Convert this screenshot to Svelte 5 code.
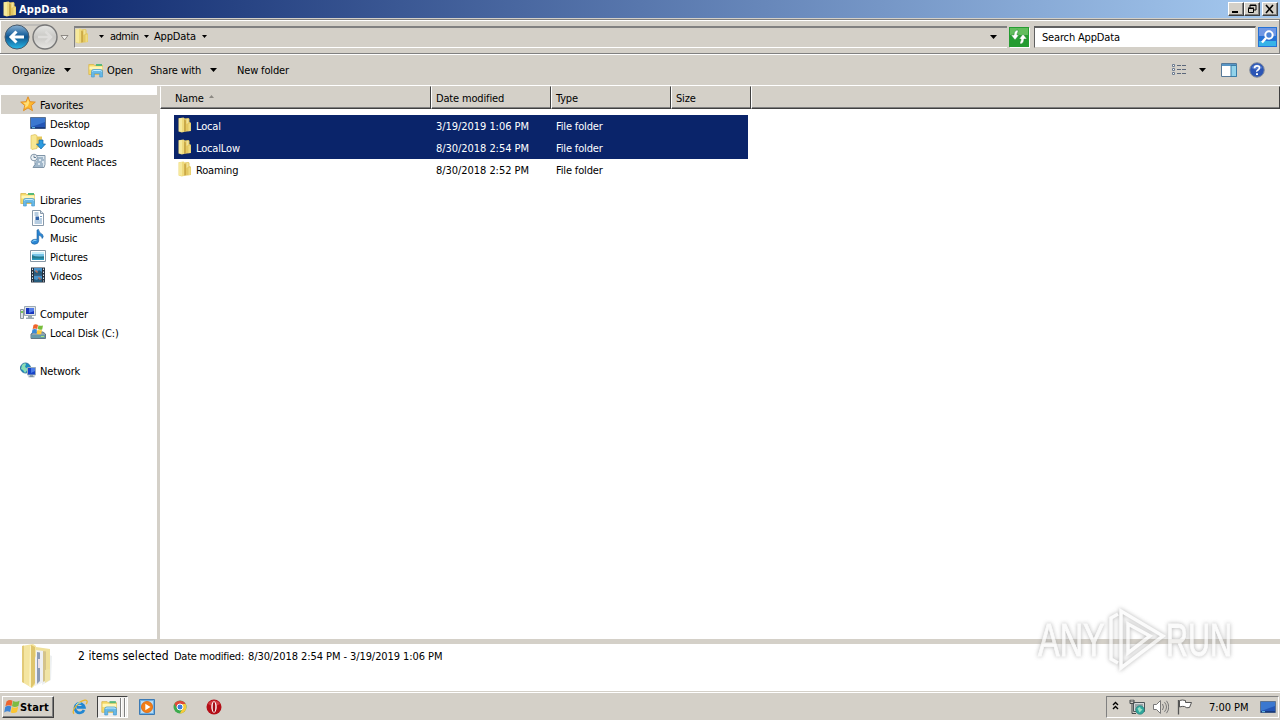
<script lang="ts">
	type NavItem = { label: string; icon: string; child?: boolean; active?: boolean };

	const navGroups: NavItem[][] = [
		[
			{ label: 'Favorites', icon: 'star', active: true },
			{ label: 'Desktop', icon: 'desktop', child: true },
			{ label: 'Downloads', icon: 'downloads', child: true },
			{ label: 'Recent Places', icon: 'recent', child: true }
		],
		[
			{ label: 'Libraries', icon: 'explorer' },
			{ label: 'Documents', icon: 'document', child: true },
			{ label: 'Music', icon: 'music', child: true },
			{ label: 'Pictures', icon: 'picture', child: true },
			{ label: 'Videos', icon: 'video', child: true }
		],
		[
			{ label: 'Computer', icon: 'computer' },
			{ label: 'Local Disk (C:)', icon: 'disk', child: true }
		],
		[{ label: 'Network', icon: 'network' }]
	];

	const files = [
		{ name: 'Local', modified: '3/19/2019 1:06 PM', type: 'File folder' },
		{ name: 'LocalLow', modified: '8/30/2018 2:54 PM', type: 'File folder' },
		{ name: 'Roaming', modified: '8/30/2018 2:52 PM', type: 'File folder' }
	];

	let selected = $state(['Local', 'LocalLow']);

	function selectFile(name: string) {
		selected = [name];
	}
</script>

<svelte:head>
	<title>AppData</title>
</svelte:head>

{#snippet icon(name: string, size = 16)}
	<svg class="icon" width={size} height={size} viewBox="0 0 16 16">
		{#if name === 'folder'}
			<path d="M7.5 1.5l4-.5 1 1v3l1.5.8V14l-6 .8z" fill="#e3c762" />
			<path d="M9.5 2l2-.3v4L9.5 7z" fill="#f0e198" />
			<path d="M11.5 7l2-.8v7.6l-2 .4z" fill="#efdb80" />
			<path d="M1.5 1.2L6.5.5l1.3 1v13.3l-3 .7-3.3-1z" fill="#efda7c" />
			<path d="M2 1.5l3-.4v13.6l-3-.7z" fill="#f6e99c" />
			<path d="M7.3 2.5l1.4 1v10.6l-1.4.7z" fill="#c39e39" />
		{:else if name === 'star'}
			<path d="M8 .8l2 4.9 5.3.4-4.1 3.4 1.3 5.2L8 11.9l-4.5 2.8 1.3-5.2L.7 6.1l5.3-.4z" fill="#ffb92c" stroke="#e0902c" />
			<path d="M8 3l1.2 3.6L8 10 4.6 12l1-3.3L3 6.8l3.7-.2z" fill="#ffdf7a" />
		{:else if name === 'desktop'}
			<path d="M.5 2.5h15v11H.5z" fill="#2456b5" stroke="#5c7391" />
			<path d="M1 3h14v4L4 11l-3 1z" fill="#3b78d0" />
			<path d="M1 12.2h14v1.3H1z" fill="#173573" />
			<path d="M2 12.2h3v1H2z" fill="#73d3f6" />
		{:else if name === 'downloads'}
			<path d="M1 1.5L5 .5l2 1v13l-5 1-1-1z" fill="#f8e793" stroke="#d9b94d" stroke-width=".6" />
			<path d="M7 2.5h5v11H7z" fill="#e7c85c" />
			<path d="M9 6h4v4h2.5l-4.5 5-4.5-5H9z" fill="#2c9be0" stroke="#1667a6" stroke-width=".7" />
		{:else if name === 'recent'}
			<path d="M5 2.5h10v9l-1 3H3l2-3z" fill="#dce7ef" stroke="#8095a8" />
			<path d="M7 5h6M7 7h2m2 0h3M6 9h6M5 11h3m2 0h3M4 13h9" stroke="#6687a5" />
			<circle cx="4" cy="4.5" r="3.3" fill="#f0f4f7" stroke="#8598aa" />
			<path d="M4 2.5v2h2" fill="none" stroke="#466480" stroke-width=".8" />
		{:else if name === 'explorer'}
			<path d="M.8 2.5h5l1 1h7.7v9H.8z" fill="#f7dc6a" stroke="#d7b650" stroke-width=".8" />
			<path d="M1.5 4.5h13v3h-13z" fill="#fff6b7" />
			<path d="M8 2h6v2H8z" fill="#57b87a" />
			<path d="M3.5 15V9.5Q3.5 7.5 5.5 7.5h7q2 0 2 2V15h-2.8v-3.5H6.3V15z" fill="#67b9e8" stroke="#4a9bd0" stroke-width=".7" />
			<path d="M4.5 9.5q0-1 1-1h7q1 0 1 1" fill="none" stroke="#c4ecff" />
		{:else if name === 'document'}
			<path d="M2.5.5h8l3 3v12h-11z" fill="#fff" stroke="#8899aa" />
			<path d="M10.5.5v3h3" fill="#d3dfe8" stroke="#8899aa" />
			<path d="M4.5 3h4M4.5 5h4M9.5 9h2.5M4.5 11h7.5M4.5 13h7.5" stroke="#6f9ac2" />
			<path d="M5.5 6.5H9V10H5.5z" fill="#2f62a8" />
			<path d="M10 6.5h2" stroke="#6f9ac2" />
		{:else if name === 'music'}
			<path d="M7 1l1.5-.5Q9 4 12.5 5.5q1.5 2-.3 4Q12 7 8.7 6v6Q8.5 15 4.5 15.3 1 15 1.2 12.6 2 10 7 10.3z" fill="#2a86d4" stroke="#165c9c" stroke-width=".6" />
			<path d="M2.5 12.5q1-1.4 4-1.2" stroke="#8bd2f8" fill="none" />
		{:else if name === 'picture'}
			<path d="M.5 2.5h15v11H.5z" fill="#fff" stroke="#8797a5" />
			<path d="M2 4h12v8H2z" fill="#78c4e8" />
			<path d="M2 4h12v2H2z" fill="#c9effa" />
			<path d="M2 7q4 2.4 12 1.2v3.8H2z" fill="#247a8e" />
			<path d="M2 10.5h12V12H2z" fill="#2b9bc0" />
		{:else if name === 'video'}
			<path d="M1 .5h14v15H1z" fill="#26313f" />
			<path d="M4 1h8v6.5H4zM4 8.5h8V15H4z" fill="#4892ca" />
			<path d="M4 4l3 1 2-2 3 2v2.5H4zM4 12l3 1 2-2 3 1v3H4z" fill="#265b7c" />
			<path d="M5 4h2v2M8 11h2v2" stroke="#d56f4d" fill="none" />
			<path d="M2.5 1.5v13M13.5 1.5v13" stroke="#dbe6ef" stroke-dasharray="1.5 1.5" />
		{:else if name === 'computer'}
			<path d="M.5 4.5h3v9h-3z" fill="#dce2e5" stroke="#8a969e" />
			<path d="M1 6h2v2H1z" fill="#78c85a" />
			<path d="M4.5 1.5h11v9h-11z" fill="#e0e4e8" stroke="#9caab3" />
			<path d="M6 3h8v6H6z" fill="#1734bd" />
			<path d="M9 3h5v3L9 8z" fill="#527cea" />
			<path d="M8 11h4v1.5h2V14H6v-1.5h2z" fill="#9aa9b3" />
		{:else if name === 'disk'}
			<path d="M1 10l3-2h9l2.5 2v4.5H1z" fill="#8ea2ae" stroke="#607785" />
			<path d="M1.5 11h13.5v3H1.5z" fill="#659aaa" />
			<path d="M11 12h3v1h-3z" fill="#a6e877" />
			<path d="M3.5 1q2-1.3 4.5 0l-.8 4q-2.3-1-4.5 0z" fill="#ef642c" />
			<path d="M8.5 1.2q2 1.2 4.5.2l-.8 4q-2.3.7-4.5-.3z" fill="#78bd3b" />
			<path d="M2.5 5.5q2-1 4.5 0l-.8 4q-2.3-1-4.5 0z" fill="#3889d7" />
			<path d="M7.5 5.8q2 1 4.5.2l-.8 4q-2.3.8-4.5-.3z" fill="#ffc836" />
		{:else if name === 'network'}
			<circle cx="5.5" cy="6" r="5" fill="#198fc2" stroke="#34729c" />
			<path d="M2 3q3-3 4-1L5 5l3 2-3 4-2-3-2-1z" fill="#8bdcb4" />
			<path d="M7.5 5.5h8v7.5h-8z" fill="#1743c7" stroke="#9aabb8" />
			<path d="M11 6h4v3l-4 2z" fill="#497be8" />
			<path d="M10 13.3h3v1h1.5v1h-6v-1H10z" fill="#7d91a1" />
		{:else if name === 'windows'}
			<path d="M2.5 2.5q3-2.5 6-.8L7.5 7Q4.5 5.3 1.4 7.3z" fill="#ed6530" />
			<path d="M9 2q3 1.6 6.6-.3L14.4 7Q11 9 8 7.3z" fill="#7dbb42" />
			<path d="M1.2 8q3-2 6.1-.5L6.2 13q-3-1.6-6 .5z" fill="#3f85d5" />
			<path d="M7.9 8q3 1.5 6.3-.2L13 13q-3 1.8-6.2.4z" fill="#fbc532" />
		{:else if name === 'ie'}
			<path d="M12 11A4.7 4.7 0 1 1 12.3 8.3H5" fill="none" stroke="#2287d2" stroke-width="2.8" />
			<path d="M2 14.8C-1 12 6 2.5 12.8 1.2c3-.5 2.7 2 1.4 4" fill="none" stroke="#e9b62c" stroke-width="1.3" />
			<path d="M4 6q2-3 5-2" fill="none" stroke="#8ee0ff" />
		{:else if name === 'wmp'}
			<path d="M.5.5h15v15H.5z" fill="#6db0e5" stroke="#3c7ab4" />
			<path d="M2 2h12v12H2z" fill="#b9dbf2" />
			<circle cx="8" cy="8" r="5.6" fill="#f27e16" stroke="#d65f08" stroke-width=".7" />
			<path d="M6.3 4.7v6.6L11.5 8z" fill="#fff" />
		{:else if name === 'chrome'}
			<circle cx="8" cy="8" r="6.5" fill="#3dab4d" />
			<path d="M2.4 4.7A6.5 6.5 0 0 1 13.6 5H8L5 9z" fill="#df4939" />
			<path d="M13.6 5A6.5 6.5 0 0 1 7.8 14.5L10.8 9 8 5z" fill="#f8c939" />
			<circle cx="8" cy="8" r="3" fill="#3c7edb" stroke="#fff" />
		{:else if name === 'opera'}
			<circle cx="8" cy="8" r="7.5" fill="#b40e17" />
			<path d="M2 5a7 7 0 0 1 12 0Q8 9 2 5z" fill="#d23c42" />
			<ellipse cx="8" cy="8" rx="2.7" ry="5.7" fill="#fff" />
			<ellipse cx="8" cy="8" rx="1.3" ry="5" fill="#a50d16" />
		{:else if name === 'tray-network'}
			<path d="M4.5 3.5h11v9h-11z" fill="#d5d9da" stroke="#4e5558" />
			<path d="M6 5h8v6H6z" fill="#9aa7a9" />
			<path d="M1 1v3.5h4V1M3 4.5v10h4M2 .5V3M4 .5V3" fill="none" stroke="#454b4c" />
			<circle cx="11" cy="11" r="4.3" fill="#31a89d" stroke="#247c7b" stroke-width=".6" />
			<path d="M8.5 9.5q3-3 3 0l2 1-3 3z" fill="#9be1c6" />
		{:else if name === 'speaker'}
			<path d="M.5 5.5h3l4-4v13l-4-4h-3z" fill="#fff" stroke="#777" />
			<path d="M9.5 5q2 3 0 6M11.5 3.2q4 4.8 0 9.6M13.5 1.8q4.5 6.2 0 12.4" fill="none" stroke="#777" />
		{:else if name === 'flag'}
			<path d="M1.5 1v14.5" stroke="#555" stroke-width="1.3" />
			<path d="M2.5 1.5q3-1 6 0v2h6l-2 5q-3 1-5-1-2-.5-5 .5z" fill="#fff" stroke="#555" />
		{:else if name === 'views'}
			<path d="M1.5 2.5h2v2h-2zM1.5 6.5h2v2h-2zM1.5 10.5h2v2h-2z" fill="#fff" stroke="#6d7c91" />
			<path d="M6 3.5h4m1 0h4M6 7.5h4m1 0h4M6 11.5h4m1 0h4" stroke="#5c687b" />
		{:else if name === 'pane'}
			<path d="M.5 1.5h15v13H.5z" fill="#fff" stroke="#557898" />
			<path d="M1 2h14v2H1z" fill="#5795c5" />
			<path d="M10 3.5h5.5v11H10z" fill="#92d3ea" stroke="#397da8" />
		{:else if name === 'help'}
			<circle cx="8" cy="8" r="7.3" fill="#2b55b5" stroke="#87909e" />
			<path d="M2.5 6a6 6 0 0 1 11 0Q8 9 2.5 6z" fill="#5379cb" />
			<path d="M5.5 6.2Q5.6 3.8 8 3.8t2.5 2Q10.5 7 9 8t-1 1.8" fill="none" stroke="#fff" stroke-width="1.7" />
			<path d="M7 11.2h2v1.7H7z" fill="#fff" />
		{/if}
	</svg>
{/snippet}

{#snippet arrow()}
	<svg class="arrow" width="7" height="4" viewBox="0 0 7 4"><path d="M0 0h7L3.5 4z" fill="#000" /></svg>
{/snippet}

<div class="screen">
	<header class="titlebar">
		{@render icon('folder')}
		<h1>AppData</h1>
		<div class="window-buttons">
			<button aria-label="Minimize"><svg width="12" height="10"><path d="M2 7h6v2H2z" /></svg></button>
			<button aria-label="Restore"><svg width="12" height="10"><path d="M4 1h6v5H8M4 1.5h6M4 1v3M2.5 4.5h5v4h-5zM2 4h6" fill="none" stroke="#000" /></svg></button>
			<button class="close" aria-label="Close"><svg width="12" height="10"><path d="M2 1l7 8M9 1L2 9" stroke="#000" stroke-width="1.6" /></svg></button>
		</div>
	</header>

	<div class="address-row">
		<svg class="nav-buttons" width="68" height="30" viewBox="0 0 68 30">
			<defs>
				<linearGradient id="back" x2="0" y2="1">
					<stop offset="0" stop-color="#8db2d2" />
					<stop offset=".35" stop-color="#2d70a8" />
					<stop offset=".5" stop-color="#10558e" />
					<stop offset="1" stop-color="#28b9e8" />
				</linearGradient>
				<linearGradient id="forward" x2="0" y2="1">
					<stop offset="0" stop-color="#e6e6e4" />
					<stop offset=".5" stop-color="#c9c8c5" />
					<stop offset="1" stop-color="#e8e7e4" />
				</linearGradient>
			</defs>
			<path d="M14 3h31" stroke="#a7a8a8" />
			<circle cx="15" cy="15" r="12" fill="url(#back)" stroke="#495b6c" />
			<path d="M22 15H9m5.5-5.5L9 15l5.5 5.5" fill="none" stroke="#fff" stroke-width="3" />
			<circle cx="43" cy="15" r="12" fill="url(#forward)" stroke="#777" stroke-width="1.4" />
			<path d="M36 15h13m-5.5-5.5L49 15l-5.5 5.5" fill="none" stroke="#dedddb" stroke-width="2.5" />
			<path d="M59 13.5h7L62.5 18z" fill="#f3f1ed" stroke="#77736e" stroke-width=".8" />
		</svg>
		<div class="address">
			{@render icon('folder')}
			<span class="crumb-start">{@render arrow()}</span>
			<span class="crumb admin">admin</span>
			{@render arrow()}
			<span class="crumb appdata">AppData</span>
			{@render arrow()}
			<span class="history">{@render arrow()}</span>
		</div>
		<button class="refresh" aria-label="Refresh">
			<svg width="20" height="20" viewBox="0 0 20 20">
				<path d="M0 0h20v20H0z" fill="#259c31" />
				<path d="M1 1h18v7H1z" fill="#62bd5d" />
				<path d="M9 3Q5 3 5 8H2l4 5 4-5H8q0-2 1-3zM11 17q4 0 4-5h3l-4-5-4 5h2q0 2-1 3z" fill="#fff" stroke="#278532" stroke-width=".5" />
			</svg>
		</button>
		<div class="search">Search AppData</div>
		<button class="search-button" aria-label="Search">
			<svg width="19" height="20" viewBox="0 0 19 20">
				<path d="M0 0h19v20H0z" fill="#2671d4" />
				<path d="M1 1h17v8H1z" fill="#6f97e4" />
				<path d="M1 14h17v5H1z" fill="#36b3e8" />
				<circle cx="11" cy="8" r="3.7" fill="#4b83d6" stroke="#fff" stroke-width="2" />
				<path d="M8 11l-4 4.5" stroke="#fff" stroke-width="2.5" />
			</svg>
		</button>
	</div>

	<nav class="toolbar">
		<span class="organize">Organize</span>
		{@render arrow()}
		<span class="open">{@render icon('explorer')} Open</span>
		<span class="share">Share with</span>
		{@render arrow()}
		<span class="new-folder">New folder</span>
		<div class="toolbar-right">
			{@render icon('views')}
			{@render arrow()}
			<span class="pane">{@render icon('pane')}</span>
			{@render icon('help')}
		</div>
	</nav>

	<main>
		<aside>
			{#each navGroups as group}
				<ul>
					{#each group as item}
						<li class:child={item.child} class:active={item.active}>
							{@render icon(item.icon)}
							<span>{item.label}</span>
						</li>
					{/each}
				</ul>
			{/each}
		</aside>

		<section class="files">
			<div class="columns">
				<span class="name">Name <svg width="5" height="3" viewBox="0 0 5 3"><path d="M0 3h5L2.5 0z" fill="#8b8882" /></svg></span>
				<span>Date modified</span>
				<span>Type</span>
				<span class="size">Size</span>
				<span class="rest"></span>
			</div>
			<div class="rows">
				{#each files as file}
					<button class="row" class:selected={selected.includes(file.name)} onclick={() => selectFile(file.name)}>
						<span class="file-name">{@render icon('folder')}{file.name}</span>
						<span class="date">{file.modified}</span>
						<span>{file.type}</span>
					</button>
				{/each}
			</div>
		</section>
	</main>

	<footer class="details">
		<svg class="big-folder" width="36" height="46" viewBox="0 0 36 46">
			<path d="M24 10l8 3-1 24-9 5z" fill="#edf0f1" />
			<path d="M16 4l14 2v30l-14 6z" fill="#efe09a" />
			<path d="M15 7l9 1v31l-9 4z" fill="#eef0f4" />
			<path d="M17 9l3 .5V38l-3 3z" fill="#8c9bb5" />
			<path d="M18 16h2v9h-2z" fill="#eadfe6" />
			<path d="M23 8l3 .5V37l-3 2z" fill="#d4c38b" />
			<path d="M25 27l5-1v11l-5 3z" fill="#f0e4a5" />
			<path d="M2 3l11-2 3 2v10l-1 2v27l-3 3-10-6z" fill="#f4e5a1" />
			<path d="M2 3l2-.4V40l-2-1z" fill="#e2ca78" />
			<path d="M11 2l4 2v36l-4 5z" fill="#dfc56d" />
			<path d="M10 3h1v41l-2-1z" fill="#fbf2c0" />
		</svg>
		<span class="count">2 items selected</span>
		<span class="detail-label">Date modified:</span>
		<span class="range">8/30/2018 2:54 PM - 3/19/2019 1:06 PM</span>
	</footer>

	<div class="taskbar">
		<button class="start">{@render icon('windows')}Start</button>
		<span class="ie">{@render icon('ie')}</span>
		<span class="task-active">{@render icon('explorer', 17)}<i></i><i></i></span>
		<span class="wmp">{@render icon('wmp')}</span>
		<span class="chrome">{@render icon('chrome')}</span>
		<span class="opera">{@render icon('opera')}</span>
		<div class="tray">
			<svg class="chevrons" width="7" height="9" viewBox="0 0 7 9"><path d="M1 4l2.5-2.5L6 4M1 8l2.5-2.5L6 8" fill="none" stroke="#000" stroke-width="1.4" /></svg>
			{@render icon('tray-network')}
			{@render icon('speaker')}
			{@render icon('flag')}
			<time>7:00 PM</time>
			{@render icon('desktop')}
		</div>
	</div>

	<div class="watermark">
		<span class="any">ANY</span>
		<svg width="60" height="64" viewBox="0 0 60 64">
			<path d="M12 6L5 10v41l7 4" />
			<path d="M15 3l42 25-42 32zm7 13v29l22-17z" />
		</svg>
		<span class="run">RUN</span>
	</div>
</div>

<style>
	:global(body) {
		overflow: hidden;
	}

	.screen {
		position: relative;
		display: flex;
		flex-direction: column;
		width: 1280px;
		height: 720px;
		background: #d4d0c8;
		font-family: 'DejaVu Sans Condensed', 'DejaVu Sans', sans-serif;
		font-stretch: condensed;
		font-size: 11px;
		letter-spacing: -0.16px;
		line-height: 13px;
		color: #000;
		white-space: nowrap;
	}

	button {
		padding: 0;
		border: 0;
		border-radius: 0;
		font: inherit;
		letter-spacing: inherit;
		color: inherit;
	}

	svg {
		display: block;
		flex: none;
	}

	.titlebar {
		display: flex;
		align-items: center;
		height: 18px;
		padding: 0 2px;
		gap: 1px;
		background: linear-gradient(90deg, #0a246a, #a6caf0);
		color: #fff;
	}

	h1 {
		margin: 0;
		font-size: 11px;
		font-weight: bold;
		letter-spacing: 0.15px;
	}

	.window-buttons {
		display: flex;
		margin-left: auto;
	}

	.window-buttons button {
		display: grid;
		place-items: center;
		box-sizing: border-box;
		width: 16px;
		height: 14px;
		background: #d4d0c8;
		border: 1px solid;
		border-color: #fff #404040 #404040 #fff;
		box-shadow: inset -1px -1px #808080;
	}

	.window-buttons .close {
		margin-left: 2px;
	}

	.address-row {
		display: flex;
		align-items: center;
		box-sizing: border-box;
		height: 35px;
		margin-top: 1px;
		padding: 0 1px;
		border: solid #808080;
		border-width: 1px 1px 1px 0;
		box-shadow: inset 1px 1px #fff, 0 1px #fff;
	}

	.nav-buttons {
		margin-left: 1px;
	}

	.address {
		display: flex;
		align-items: center;
		box-sizing: border-box;
		width: 933px;
		height: 22px;
		margin-left: 4px;
		border: solid #808080;
		border-width: 2px 0 0 1px;
		border-bottom: 1px solid #fff;
	}

	.address > .icon {
		margin: -3px 0 0 -1px;
	}

	.address .arrow {
		width: 5px;
		height: 3px;
		margin-top: -1px;
	}

	.address .crumb {
		margin-top: -2px;
	}

	.address .crumb-start {
		margin: 0 6px 0 9px;
	}

	.address .admin {
		width: 34px;
		letter-spacing: -0.5px;
	}

	.address .appdata {
		width: 48px;
		margin-left: 5px;
	}

	.address .history {
		margin: 0 10px 0 auto;
	}

	.history .arrow {
		width: 7px;
		height: 4px;
	}

	.refresh {
		margin-left: 2px;
		box-shadow: 1px 1px #fff;
	}

	.search {
		box-sizing: border-box;
		width: 222px;
		height: 22px;
		margin-left: 5px;
		padding: 3px 7px;
		background: #fff;
		border: 1px solid;
		border-color: #606060 #d4d0c8 #d4d0c8 #606060;
		border-top-width: 2px;
	}

	.search-button {
		margin-left: 2px;
	}

	.toolbar {
		display: flex;
		align-items: center;
		box-sizing: border-box;
		height: 32px;
		padding: 1px 15px 0 12px;
		border-bottom: 1px solid #fff;
	}

	.organize {
		width: 52px;
		padding-top: 1px;
	}

	.open {
		display: flex;
		align-items: center;
		gap: 3px;
		width: 62px;
		margin-left: 17px;
	}

	.share {
		width: 60px;
		padding-top: 1px;
	}

	.new-folder {
		margin-left: 20px;
		padding-top: 1px;
	}

	.toolbar-right {
		display: flex;
		align-items: center;
		gap: 12px;
		margin-left: auto;
	}

	.pane {
		margin-left: 3px;
	}

	main {
		display: flex;
		height: 553px;
		background: #fff;
	}

	aside {
		box-sizing: border-box;
		width: 160px;
		padding-top: 9px;
		border-right: 3px solid #d4d0c8;
	}

	ul {
		margin: 0 0 19px;
		padding: 0;
		list-style: none;
	}

	li {
		display: flex;
		align-items: center;
		gap: 4px;
		height: 19px;
		margin-left: 1px;
		padding-left: 19px;
	}

	li .icon {
		margin-top: -2px;
	}

	li span {
		padding-top: 1px;
	}

	li.child {
		padding-left: 29px;
	}

	li.active {
		background: #d4d0c8;
	}

	.files {
		flex: 1;
	}

	.columns {
		display: grid;
		grid-template-columns: 271px 120px 120px 80px 1fr;
		height: 23px;
		background: #d4d0c8;
	}

	.columns span {
		box-sizing: border-box;
		padding: 5px 4px 0;
		border: 1px solid;
		border-color: #d4d0c8 #404040 #404040 #fff;
		box-shadow: inset 0 -1px #808080;
	}

	.columns .name {
		display: flex;
		gap: 5px;
		padding-left: 14px;
	}

	.name svg {
		margin-top: 3px;
	}

	.rows {
		padding: 6px 0 0 14px;
	}

	.row {
		display: grid;
		grid-template-columns: 262px 120px 1fr;
		align-items: center;
		width: 574px;
		height: 22px;
		background: none;
		text-align: left;
	}

	.row.selected {
		background: #0a246a;
		color: #fff;
	}

	.file-name {
		display: flex;
		align-items: center;
		gap: 3px;
		padding-left: 3px;
	}

	.file-name .icon {
		margin-top: -2px;
	}

	.date {
		letter-spacing: -0.05px;
	}

	.details {
		display: flex;
		box-sizing: border-box;
		height: 53px;
		padding: 6px 0 0 78px;
		background: #fff;
		border-top: 5px solid #d4d0c8;
		border-bottom: 1px solid #d4d0c8;
	}

	.big-folder {
		margin: -7px 22px 0 -58px;
	}

	.count {
		width: 96px;
		font-size: 12px;
		letter-spacing: 0.08px;
	}

	.detail-label {
		letter-spacing: -0.25px;
	}

	.range {
		margin-left: 4px;
		letter-spacing: -0.08px;
	}

	.taskbar {
		display: flex;
		align-items: center;
		box-sizing: border-box;
		height: 28px;
		padding: 1px 1px 0 2px;
		border-top: 1px solid #fff;
		box-shadow: inset 0 1px #d4d0c8;
	}

	.start {
		display: flex;
		align-items: center;
		box-sizing: border-box;
		width: 52px;
		height: 22px;
		padding-left: 1px;
		background: #d4d0c8;
		border: 1px solid;
		border-color: #fff #404040 #404040 #fff;
		box-shadow: inset -1px -1px #808080;
		font-weight: bold;
		letter-spacing: 0.15px;
	}

	.ie {
		margin-left: 18px;
	}

	.task-active {
		display: flex;
		align-items: center;
		box-sizing: border-box;
		width: 31px;
		height: 22px;
		margin-left: 9px;
		padding-left: 3px;
		background: #f0eeeb;
		border: 1px solid;
		border-color: #404040 #fff #fff #404040;
	}

	.task-active i {
		width: 1px;
		height: 19px;
		margin-left: 2px;
		background: #808080;
		border-right: 1px solid #fff;
	}

	.wmp {
		margin-left: 11px;
	}

	.chrome {
		margin-left: 17px;
	}

	.opera {
		margin-left: 18px;
	}

	.tray {
		display: flex;
		align-items: center;
		box-sizing: border-box;
		width: 173px;
		height: 22px;
		margin-left: auto;
		padding: 0 2px 0 5px;
		gap: 8px;
		border: 1px solid;
		border-color: #808080 #fff #fff #808080;
	}

	.chevrons {
		margin: -3px 2px 0 0;
	}

	time {
		width: 43px;
		margin-left: 8px;
		letter-spacing: -0.05px;
	}

	/* Translucent logo floating over the window */
	.watermark {
		position: absolute;
		left: 1038px;
		top: 608px;
		display: flex;
		align-items: center;
		height: 64px;
		font-family: 'Liberation Sans', sans-serif;
		font-size: 47px;
		line-height: 68px;
		letter-spacing: 0;
		color: #fafafa;
		filter: drop-shadow(0 0 2px #999);
		opacity: 0.75;
		pointer-events: none;
	}

	.watermark svg {
		fill: none;
		stroke: #fafafa;
		stroke-width: 3.5;
	}

	.any {
		width: 68px;
		-webkit-text-stroke: 0.9px #fafafa;
		transform: scaleX(0.69);
		transform-origin: left;
	}

	.run {
		width: 68px;
		-webkit-text-stroke: 0.9px #fafafa;
		transform: scaleX(0.65);
		transform-origin: left;
	}
</style>
